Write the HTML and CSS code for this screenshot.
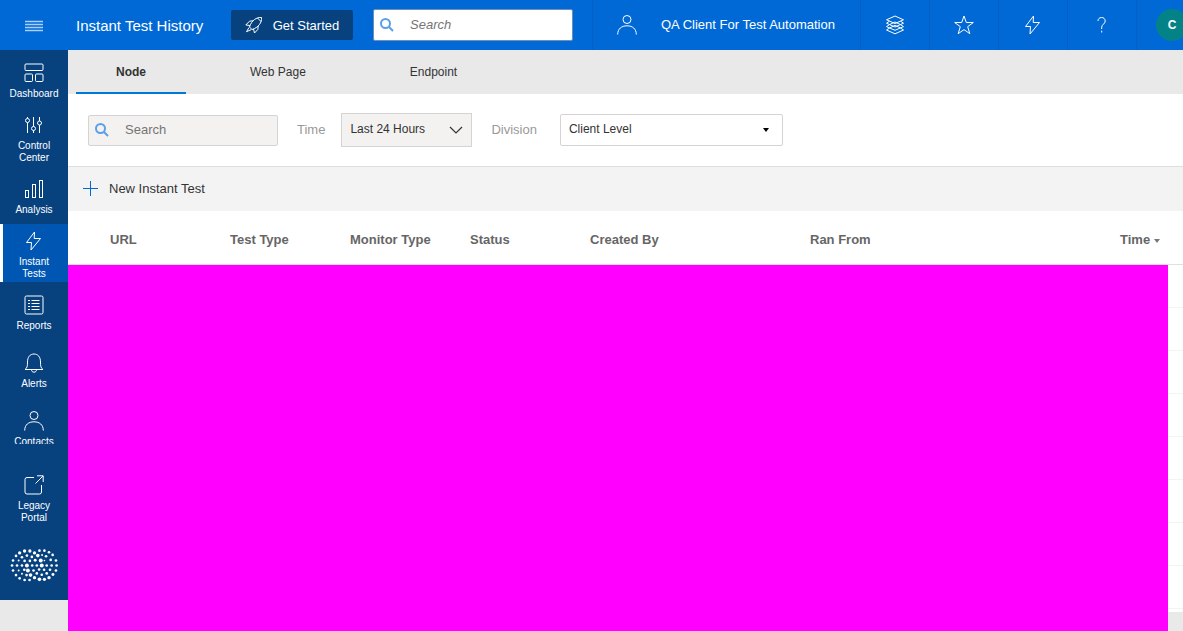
FILE: index.html
```html
<!DOCTYPE html>
<html lang="en">
<head>
<meta charset="utf-8">
<title>Instant Test History</title>
<link rel="stylesheet" href="styles.css">
</head>
<body>
<header class="topbar">
  <button class="menu-button" aria-label="Menu">
    <svg width="18" height="12" viewBox="0 0 18 12" stroke="currentColor" stroke-width="1.300"><path d="M0 1.500h18M0 4.500h18M0 7.500h18M0 10.500h18"/></svg>
  </button>
  <h1 class="title">Instant Test History</h1>
  <button class="get-started">
    <svg class="line-icon" width="18" height="18" viewBox="0 0 18 18"><path d="M16.500 1.500C11.500 1 6.500 4.500 4.500 11L7 13.500C13.500 11.500 17 6.500 16.500 1.500zM12.500 2l3.700 3.700M8 4.800L4.500 5.200.800 9l4.200.500M13.200 10L12.800 13.500 9.500 17 8.500 13M4 11.500l-2.500 4.200 5-2.200"/></svg>
    Get Started
  </button>
  <label class="top-search">
    <svg class="lens" width="14" height="14" viewBox="0 0 14 14"><circle cx="5.500" cy="5.500" r="4.500"/><path d="M9 9l4 4"/></svg>
    <input type="search" placeholder="Search" aria-label="Search">
  </label>
  <button class="client">
    <svg class="line-icon" width="20" height="20" viewBox="0 0 20 20"><circle cx="10" cy="4.500" r="4"/><path d="M.700 19.500C.700 13.800 4.500 10.800 10 10.800s9.300 3 9.300 8.700"/></svg>
    <span>QA Client For Test Automation</span>
  </button>
  <button class="tool" aria-label="Layers">
    <svg class="line-icon" width="20" height="20" viewBox="0 0 20 20"><path d="M10 1l8.500 3.800L10 8.500 1.500 4.800zM4.500 6.200L1.500 8.200 10 12l8.500-3.800-3-2M4.500 9.600l-3 2L10 15.300l8.500-3.700-3-2M4.500 13l-3 2L10 18.800l8.500-3.800-3-2M4.500 9.600L10 7l5.500 2.600M4.500 13L10 10.400l5.500 2.600"/></svg>
  </button>
  <button class="tool" aria-label="Favorites">
    <svg class="line-icon" width="20" height="20" viewBox="0 0 20 20"><path d="M10 1l2.300 6.500h7l-5.600 4.200 2.100 7L10 14.600l-5.800 4.100 2.100-7L.700 7.500h7z"/></svg>
  </button>
  <button class="tool" aria-label="Instant test">
    <svg class="line-icon" width="20" height="20" viewBox="0 0 20 20"><path d="M10.500 1L2.500 11.500h5L7 19 16.500 7.500H10.200z"/></svg>
  </button>
  <button class="tool" aria-label="Help">
    <svg class="line-icon" width="20" height="20" viewBox="0 0 20 20"><path d="M6 6C6 4 7.300 2.500 9.500 2.500S13.200 3.800 13.200 6c0 3-3.500 3.400-3.500 6.200v1.800M9.700 15.700v1.800"/></svg>
  </button>
  <button class="tool account" aria-label="Account"><span class="avatar">C</span></button>
</header>

<div class="layout">
  <nav class="sidebar">
    <a class="nav-item" href="#"><svg class="line-icon" width="20" height="20" viewBox="0 0 20 20"><rect x="1" y="1" width="18" height="6.500" rx="1"/><rect x="1" y="11" width="7.500" height="7.500" rx="1"/><rect x="11.500" y="11" width="7.500" height="7.500" rx="1"/></svg><span>Dashboard</span></a>
    <a class="nav-item" href="#"><svg class="line-icon" width="20" height="20" viewBox="0 0 20 20"><path d="M3.500 2v1.500M3.500 7.500V18M9.500 2v9.500M9.500 15.500V18M15.500 2v4M15.500 10v8"/><circle cx="3.500" cy="5.500" r="2"/><circle cx="9.500" cy="13.500" r="2"/><circle cx="15.500" cy="8" r="2"/></svg><span>Control Center</span></a>
    <a class="nav-item" href="#"><svg class="line-icon" width="20" height="20" viewBox="0 0 20 20"><rect x="1.500" y="11.500" width="3" height="7"/><rect x="8.500" y="5.500" width="3" height="13"/><rect x="15.500" y="1.500" width="3" height="17"/></svg><span>Analysis</span></a>
    <a class="nav-item active" href="#"><svg class="line-icon" width="20" height="20" viewBox="0 0 20 20"><path d="M10.500 1L2.500 11.500h5L7 19 16.500 7.500H10.200z"/></svg><span>Instant Tests</span></a>
    <a class="nav-item" href="#"><svg class="line-icon" width="20" height="20" viewBox="0 0 20 20"><rect x="1" y="1" width="18" height="18" rx="1.500"/><path d="M4 5.500h2M7.500 5.500h8M4 8.500h2M7.500 8.500h8M4 11.500h2M7.500 11.500h8M4 14.500h2M7.500 14.500h8"/></svg><span>Reports</span></a>
    <a class="nav-item" href="#"><svg class="line-icon" width="20" height="20" viewBox="0 0 20 20"><path d="M1 16.500c2.300-1.500 2.500-3.500 2.500-7.500 0-5 2.500-8 6.500-8s6.500 3 6.500 8c0 4 .200 6 2.500 7.500zM7.500 16.500c0 1.800 1 2.700 2.500 2.700s2.500-.900 2.500-2.700"/></svg><span>Alerts</span></a>
    <a class="nav-item clipped" href="#"><svg class="line-icon" width="20" height="20" viewBox="0 0 20 20"><circle cx="10" cy="4.500" r="4"/><path d="M.700 19.500C.700 13.800 4.500 10.800 10 10.800s9.300 3 9.300 8.700"/></svg><span>Contacts</span></a>
    <a class="nav-item legacy" href="#"><svg class="line-icon" width="20" height="20" viewBox="0 0 20 20"><path d="M10 2.500H3a2 2 0 0 0-2 2V17a2 2 0 0 0 2 2h12.500a2 2 0 0 0 2-2v-7M11.500 8.500L19 1M13 .800h6.200V7"/></svg><span>Legacy Portal</span></a>
    <svg class="brand" width="49" height="33" viewBox="14 28 146 100" fill="#fff">
      <g><circle cx="57" cy="34" r="5"/><circle cx="73" cy="34" r="5"/><circle cx="42" cy="40" r="5"/><circle cx="87" cy="40" r="5"/><circle cx="31" cy="49" r="4"/><circle cx="64" cy="48" r="4"/><circle cx="79" cy="52" r="4"/><circle cx="97" cy="48" r="5.500"/><circle cx="106" cy="63" r="6"/><circle cx="89" cy="62" r="4.500"/><circle cx="22" cy="63" r="4"/><circle cx="19" cy="78" r="4"/><circle cx="64" cy="78" r="6"/><circle cx="80" cy="78" r="4"/><circle cx="94" cy="78" r="4"/><circle cx="109" cy="78" r="6"/><circle cx="124" cy="78" r="4"/><circle cx="139" cy="78" r="4"/><circle cx="154" cy="78" r="4"/><circle cx="152" cy="93" r="4"/><circle cx="134" cy="91" r="4"/><circle cx="67" cy="93" r="6"/><circle cx="84" cy="93" r="4"/><circle cx="75" cy="107" r="5.500"/><circle cx="94" cy="102" r="4"/><circle cx="109" cy="106" r="4"/><circle cx="124" cy="102" r="4"/><circle cx="143" cy="105" r="4.500"/><circle cx="87" cy="115" r="5"/><circle cx="102" cy="120" r="5.500"/><circle cx="117" cy="120" r="5"/><circle cx="131" cy="115" r="5"/></g>
      <g><circle cx="102" cy="33" r="4"/><circle cx="117" cy="33" r="4"/><circle cx="131" cy="38" r="4"/><circle cx="110" cy="46" r="3"/><circle cx="122" cy="50" r="4"/><circle cx="142" cy="46" r="4"/><circle cx="49" cy="53" r="4"/><circle cx="39" cy="63" r="3"/><circle cx="57" cy="64" r="4"/><circle cx="73" cy="64" r="4"/><circle cx="117" cy="63" r="2.500"/><circle cx="136" cy="61" r="4"/><circle cx="152" cy="63" r="4"/><circle cx="34" cy="78" r="4"/><circle cx="49" cy="78" r="4"/><circle cx="22" cy="93" r="4"/><circle cx="39" cy="93" r="3"/><circle cx="56" cy="91" r="4"/><circle cx="101" cy="90" r="4"/><circle cx="116" cy="91" r="4"/><circle cx="31" cy="107" r="4"/><circle cx="49" cy="103" r="3"/><circle cx="63" cy="107" r="4"/><circle cx="42" cy="117" r="4"/><circle cx="57" cy="122" r="4"/><circle cx="72" cy="122" r="4"/></g>
    </svg>
  </nav>

  <main class="content">
    <div class="tabs" role="tablist">
      <button class="tab selected" role="tab" aria-selected="true">Node</button>
      <button class="tab" role="tab" aria-selected="false">Web Page</button>
      <button class="tab" role="tab" aria-selected="false">Endpoint</button>
    </div>
    <form class="filters">
      <label class="filter-search">
        <svg class="lens" width="14" height="14" viewBox="0 0 14 14"><circle cx="5.500" cy="5.500" r="4.500"/><path d="M9 9l4 4"/></svg>
        <input type="search" placeholder="Search" aria-label="Search tests">
      </label>
      <label class="filter-label" for="time">Time</label>
      <div class="select time-select">
        <select id="time"><option>Last 24 Hours</option></select>
        <svg class="arrow" width="14" height="8" viewBox="0 0 14 8" fill="none" stroke="#333" stroke-width="1.200"><path d="M1 1l6 6 6-6"/></svg>
      </div>
      <label class="filter-label" for="division">Division</label>
      <div class="select division-select">
        <select id="division"><option>Client Level</option></select>
        <svg class="arrow" width="6" height="4" viewBox="0 0 6 4"><path d="M0 0h6L3 4z"/></svg>
      </div>
    </form>
    <div class="actions">
      <button class="new-test">
        <svg width="15" height="15" viewBox="0 0 15 15" stroke="#0069d2"><path d="M0 7.500h15M7.500 0v15"/></svg>
        New Instant Test
      </button>
    </div>
    <table class="columns">
      <thead>
        <tr>
          <th class="url">URL</th>
          <th class="type">Test Type</th>
          <th class="type">Monitor Type</th>
          <th class="type">Status</th>
          <th class="author">Created By</th>
          <th class="origin">Ran From</th>
          <th>Time <svg class="sort" width="6" height="4" viewBox="0 0 6 4"><path d="M0 0h6L3 4z"/></svg></th>
        </tr>
      </thead>
    </table>
    <div class="results">
      <div class="rows"></div>
      <div class="gutter"></div>
    </div>
  </main>
</div>
</body>
</html>
```
FILE: styles.css
```css
* {
  box-sizing: border-box;
}

body {
  margin: 0;
  min-height: 100vh;
  display: flex;
  flex-direction: column;
  background: #e9e9e9;
  color: #333;
  font-family: "Liberation Sans", Arial, sans-serif;
  font-size: 13px;
  overflow-x: hidden;
}

button,
input,
select {
  font: inherit;
  color: inherit;
  margin: 0;
  padding: 0;
  border: 0;
  background: none;
}

svg {
  flex: none;
}

.line-icon {
  fill: none;
  stroke: currentColor;
  stroke-width: 1;
}

.lens {
  fill: none;
  stroke: #5b9fe8;
  stroke-width: 2;
}

.topbar {
  display: flex;
  align-items: center;
  height: 50px;
  background: #0069d6;
  color: #fff;
  overflow: hidden;
}

.topbar > * {
  flex: none;
}

.menu-button {
  width: 68px;
  height: 50px;
  display: grid;
  place-items: center;
  padding-top: 2px;
  color: #a9d0f8;
}

.title {
  width: 155px;
  margin: 0 0 0 8px;
  font-size: 15px;
  font-weight: 400;
}

.get-started {
  display: flex;
  align-items: center;
  justify-content: center;
  gap: 10px;
  width: 122px;
  height: 30px;
  border-radius: 2px;
  background: #07427f;
}

.top-search,
.filter-search {
  display: flex;
  align-items: center;
  border-radius: 2px;
}

.top-search {
  width: 200px;
  height: 32px;
  margin: 0 19px 0 20px;
  padding-left: 6px;
  gap: 16px;
  background: #fff;
  border: 1px solid #6c8fb8;
}

input {
  flex: 1;
  min-width: 0;
  padding-bottom: 2px;
  outline: 0;
}

.top-search input {
  color: #333;
  font-style: italic;
}

input::placeholder {
  color: #757575;
  opacity: 1;
}

.client,
.tool {
  height: 50px;
  border-left: 1px solid #0560c4;
}

.client {
  display: flex;
  align-items: center;
  gap: 24px;
  width: 268px;
  padding: 0 0 2px 24px;
}

.client svg {
  margin-top: 2px;
}

.tool {
  display: grid;
  place-items: center;
  width: 69px;
}

.account {
  padding-left: 2px;
}

.avatar {
  display: grid;
  place-items: center;
  width: 32px;
  height: 32px;
  border-radius: 50%;
  background: #038387;
  font-size: 12px;
  font-weight: 700;
}

.layout {
  flex: 1;
  display: flex;
}

.sidebar {
  flex: none;
  align-self: flex-start;
  width: 68px;
  height: 550px;
  background: #07427f;
}

.nav-item {
  display: flex;
  flex-direction: column;
  align-items: center;
  justify-content: center;
  gap: 5px;
  height: 58px;
  padding: 4px 8px 0;
  color: #fff;
  font-size: 10px;
  line-height: 12px;
  text-align: center;
  text-decoration: none;
}

.nav-item.active {
  background: #0057b3;
  border-left: 3px solid #fff;
  padding-right: 11px;
}

.clipped span {
  height: 8px;
  margin-bottom: 4px;
  overflow: hidden;
}

.legacy {
  margin-top: 12px;
}

.brand {
  display: block;
  margin: 23px auto 0;
}

.content {
  flex: 1;
  min-width: 0;
  display: flex;
  flex-direction: column;
}

.tabs {
  display: flex;
  gap: 24px;
  height: 44px;
  padding-left: 8px;
  font-size: 12px;
}

.tab {
  padding: 2px 40px 0;
  border-bottom: 2px solid transparent;
}

.tab.selected {
  font-weight: 700;
  border-color: #0078d4;
}

.filters {
  display: flex;
  align-items: center;
  height: 72px;
  padding-left: 20px;
  background: #fff;
}

.filter-search {
  width: 190px;
  height: 31px;
  padding-left: 6px;
  gap: 16px;
  background: #f3f2f1;
  border: 1px solid #d4d4d4;
}

.filter-label {
  margin: 0 16px 0 19px;
  padding-bottom: 2px;
  color: #999;
}

.select {
  position: relative;
  font-size: 12px;
}

.select select {
  width: 100%;
  height: 100%;
  padding: 0 8px 3px;
  border: 1px solid #d4d4d4;
  appearance: none;
}

.arrow {
  position: absolute;
  top: 50%;
  translate: 0 -50%;
  pointer-events: none;
}

.time-select {
  width: 131px;
  height: 34px;
  background: #f3f2f1;
}

.time-select .arrow {
  right: 9px;
}

.division-select {
  width: 223px;
  height: 32px;
  margin-left: 7px;
}

.division-select select {
  border-radius: 2px;
}

.division-select .arrow {
  right: 14px;
}

.actions {
  height: 45px;
  display: flex;
  align-items: center;
  padding: 0 0 2px 15px;
  background: #f3f3f3;
  border-top: 1px solid #dedede;
}

.new-test {
  display: flex;
  align-items: center;
  gap: 11px;
}

.columns {
  width: 100%;
  height: 54px;
  table-layout: fixed;
  border-collapse: collapse;
  background: #fff;
  color: #666;
}

.columns th {
  padding: 4px 0 0 10px;
  border-bottom: 1px solid #e0e0e0;
  text-align: left;
  font-weight: 700;
}

.columns .url {
  width: 152px;
  padding-left: 42px;
}

.type {
  width: 120px;
}

.author {
  width: 220px;
}

.origin {
  width: 310px;
}

.sort {
  fill: #777;
  vertical-align: middle;
}

.results {
  flex: 1;
  display: flex;
}

.rows {
  flex: 1;
  background: #f0f;
}

.gutter {
  width: 15px;
  margin-bottom: 19px;
  background: repeating-linear-gradient(#fff 0 42px, #f3f3f3 42px 43px);
}
```
